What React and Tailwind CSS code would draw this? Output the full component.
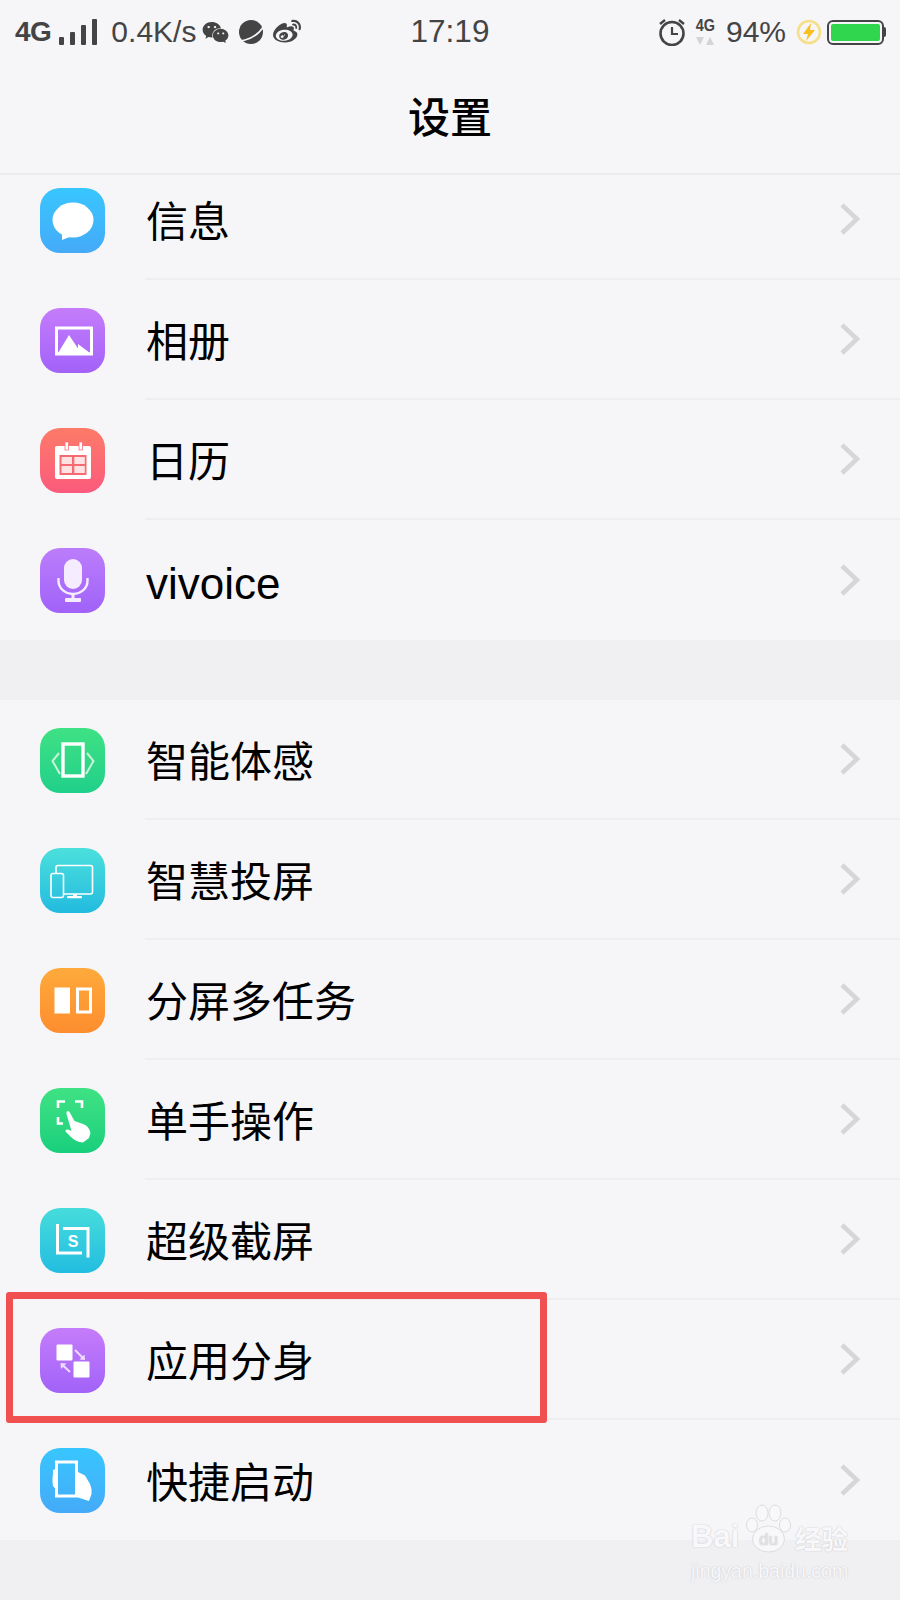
import { FaWeixin, FaWeibo } from "react-icons/fa";

const FONT = "font-['Liberation_Sans','Noto_Sans_CJK_SC',sans-serif]";

// Icon glyphs, drawn in a 65x65 box that fills the tile
function IconMessage() {
  return (
    <>
      <ellipse cx="33" cy="32" rx="20.5" ry="17.5" fill="#fff" />
      <path d="M22 43 L22 52 L32 48 Z" fill="#fff" />
    </>
  );
}

function IconPhoto() {
  return (
    <>
      <rect x="16.5" y="20" width="35" height="26" fill="none" stroke="#fff" strokeWidth="3" />
      <path d="M18 45 L29 27 L41 45 Z" fill="#fff" />
      <path d="M38 36 L50 45 L38 45 Z" fill="#fff" />
    </>
  );
}

function IconCalendar() {
  return (
    <>
      <rect x="15" y="18" width="36" height="33" rx="2" fill="#fff" />
      <rect x="25" y="14" width="3.4" height="8" fill="#fff" stroke="#f9707a" strokeWidth="0.8" />
      <rect x="39" y="14" width="3.4" height="8" fill="#fff" stroke="#f9707a" strokeWidth="0.8" />
      <rect x="19.5" y="27" width="27" height="20" fill="#f76a72" />
      <rect x="21.5" y="29" width="10.5" height="7" fill="#ffe3e3" />
      <rect x="34.3" y="29" width="10.5" height="7" fill="#ffe3e3" />
      <rect x="21.5" y="38" width="10.5" height="7" fill="#ffe3e3" />
      <rect x="34.3" y="38" width="10.5" height="7" fill="#ffe3e3" />
    </>
  );
}

function IconMic() {
  return (
    <>
      <rect x="24" y="11" width="18" height="30" rx="9" fill="#f6ecff" />
      <path d="M18.5 30 v3 a14.5 13 0 0 0 29 0 v-3" fill="none" stroke="#f6ecff" strokeWidth="2.4" />
      <rect x="31.5" y="45" width="3" height="6" fill="#f6ecff" />
      <rect x="25" y="50" width="16" height="4" rx="1" fill="#f6ecff" />
    </>
  );
}

function IconMotion() {
  return (
    <>
      <rect x="23" y="16" width="20" height="32" fill="none" stroke="#fff" strokeWidth="3.4" />
      <path d="M19 25 L12.5 33 L20 46" fill="none" stroke="#c8f5d8" strokeWidth="2" />
      <path d="M47 25 L53.5 33 L46 46" fill="none" stroke="#c8f5d8" strokeWidth="2" />
    </>
  );
}

function IconCast() {
  return (
    <>
      <path d="M16 25 V19.5 a2 2 0 0 1 2-2 H50.5 a2 2 0 0 1 2 2 V44 a2 2 0 0 1-2 2 H24" fill="none" stroke="#fff" strokeWidth="1.6" />
      <path d="M33 46 h4 v3 h-4z" fill="#fff" />
      <rect x="27" y="48" width="15" height="2.2" rx="1" fill="#fff" />
      <rect x="11" y="25.5" width="12.5" height="24" rx="2" fill="none" stroke="#fff" strokeWidth="1.6" />
    </>
  );
}

function IconSplit() {
  return (
    <>
      <rect x="14.5" y="19.5" width="15.5" height="26" fill="#fff" />
      <rect x="37.5" y="21" width="13" height="23" fill="none" stroke="#fff" strokeWidth="3" />
    </>
  );
}

function IconOneHand() {
  return (
    <>
      <path d="M18 20 V13.5 H25 M35 13.5 H42 V20 M18 29 V35.5 H23" fill="none" stroke="#fff" strokeWidth="2.6" />
      <path d="M26.5 24 Q28 22 29.5 24 L34.5 33 L43 36 Q49 38 50.5 45 L49 50 L43 54.5 Q36 54 31 49 L25.5 43.5 Q25 41 28 41.5 L31.5 43 L26.5 26 Z" fill="#fff" />
    </>
  );
}

function IconScreenshot() {
  return (
    <>
      <path d="M17.5 16 V45 H42" fill="none" stroke="#fff" strokeWidth="3" />
      <path d="M23 20.5 H48 V49.5" fill="none" stroke="#fff" strokeWidth="3" />
      <text x="33" y="38.5" textAnchor="middle" fontSize="16" fontWeight="700" fontFamily="Liberation Sans" fill="#fff">S</text>
    </>
  );
}

function IconClone() {
  return (
    <>
      <rect x="16.5" y="16.5" width="16" height="16" rx="1" fill="#fff" />
      <rect x="33.5" y="33.5" width="16" height="16" rx="1" fill="#fff" />
      <path d="M35 22 L43 30" stroke="#ecdcff" strokeWidth="2" />
      <path d="M45 32 L44.5 26.5 L39.5 31.5 Z" fill="#ecdcff" />
      <path d="M30 44 L23 37.5" stroke="#ecdcff" strokeWidth="2" />
      <path d="M20.5 35 L21 41 L26.5 35.5 Z" fill="#ecdcff" />
    </>
  );
}

function IconQuick() {
  return (
    <>
      <rect x="16.5" y="14" width="20" height="34" fill="none" stroke="#fff" strokeWidth="3" />
      <path d="M38 24 L45 27.5 L50 36 Q52 40 51.5 46 L49 53 L38 49.5 Z" fill="#fff" />
      <path d="M16 21 L13 22 V26 L12.5 30 V34 L13 38 L15.5 41 Z" fill="#fff" />
    </>
  );
}

const GROUP_ONE = [
  { label: "信息", tile: "from-[#38c6fe] to-[#44aaf8]", Glyph: IconMessage },
  { label: "相册", tile: "from-[#c57cfb] to-[#a262f8]", Glyph: IconPhoto },
  { label: "日历", tile: "from-[#fd7a68] to-[#fb5a7c]", Glyph: IconCalendar },
  { label: "vivoice", tile: "from-[#bc7dfb] to-[#a062f8]", Glyph: IconMic, wide: true },
];

const GROUP_TWO = [
  { label: "智能体感", tile: "from-[#3ee184] to-[#1fd08a]", Glyph: IconMotion },
  { label: "智慧投屏", tile: "from-[#4be0dc] to-[#21bbdf]", Glyph: IconCast },
  { label: "分屏多任务", tile: "from-[#feaa3c] to-[#fd8d2e]", Glyph: IconSplit },
  { label: "单手操作", tile: "from-[#3ee284] to-[#17cf7c]", Glyph: IconOneHand },
  { label: "超级截屏", tile: "from-[#46dcdc] to-[#22bde0]", Glyph: IconScreenshot },
  { label: "应用分身", tile: "from-[#c57cfb] to-[#a262f8]", Glyph: IconClone },
  { label: "快捷启动", tile: "from-[#38c6fe] to-[#44aaf8]", Glyph: IconQuick },
];

function SettingsRow({ label, tile, Glyph, last, wide }) {
  return (
    <div className="flex h-[120px] items-center pl-[40px]">
      <div className={`h-[65px] w-[65px] shrink-0 rounded-[20px] bg-linear-to-b ${tile}`}>
        <svg viewBox="0 0 65 65" className="h-full w-full">
          <Glyph />
        </svg>
      </div>
      <div className={`ml-[40px] flex h-full flex-1 items-center justify-between pr-[38px] ${last ? "" : "border-b-2 border-[#eeedf0]"}`}>
        <span className={`pl-[1px] pt-[8px] leading-none text-black ${wide ? "text-[44px]" : "text-[42px]"}`}>{label}</span>
        <svg viewBox="0 0 24 34" className="h-[34px] w-[24px]">
          <path d="M4 3 L19 17 L4 31" fill="none" stroke="#d6d6d8" strokeWidth="4.5" />
        </svg>
      </div>
    </div>
  );
}

function SignalBars() {
  return (
    <div className="flex h-[26px] items-end gap-[6px]">
      <div className="h-[8px] w-[5px] rounded-[1px] bg-[#444]" />
      <div className="h-[13px] w-[5px] rounded-[1px] bg-[#444]" />
      <div className="h-[20px] w-[5px] rounded-[1px] bg-[#444]" />
      <div className="h-[26px] w-[5px] rounded-[1px] bg-[#444]" />
    </div>
  );
}

function StatusBar() {
  return (
    <div className="grid h-[62px] grid-cols-[1fr_auto_1fr] items-center pt-[2px] text-[30px] leading-none text-[#444]">
      <div className="flex items-center pl-[15px]">
        <span className="text-[28px] font-bold tracking-[-0.5px]">4G</span>
        <div className="ml-[8px]"><SignalBars /></div>
        <span className="ml-[14px]">0.4K/s</span>
        <FaWeixin className="ml-[6px] text-[27px]" />
        <svg viewBox="0 0 28 28" className="ml-[8px] h-[28px] w-[28px]">
          <circle cx="14" cy="14" r="12" fill="#444" />
          <path d="M1 21 Q1 24 8 22 Q20 19 27 8 Q28 4 25 4" fill="none" stroke="#f6f5f8" strokeWidth="1.6" />
        </svg>
        <FaWeibo className="ml-[8px] text-[28px]" />
      </div>
      <span className="text-[31.5px]">17:19</span>
      <div className="flex items-center justify-end pr-[14px]">
        <svg viewBox="0 0 28 28" className="h-[28px] w-[28px]">
          <circle cx="14" cy="15.5" r="11.5" fill="none" stroke="#444" strokeWidth="2.6" />
          <path d="M14 9 V16 H20" fill="none" stroke="#444" strokeWidth="2.2" />
          <path d="M2 6 L7 2 M26 6 L21 2" stroke="#444" strokeWidth="2.4" />
        </svg>
        <div className="ml-[7px] flex w-[24px] flex-col items-center">
          <span className="origin-center scale-x-[0.85] text-[17px] font-bold leading-[16px]">4G</span>
          <svg viewBox="0 0 20 9" className="mt-[3px] h-[9px] w-[20px]">
            <path d="M1 0 H9 L5 8 Z M11 8 H19 L15 0 Z" fill="#d4d4d6" />
          </svg>
        </div>
        <span className="ml-[9px]">94%</span>
        <svg viewBox="0 0 26 26" className="ml-[10px] h-[26px] w-[26px]">
          <circle cx="13" cy="13" r="11" fill="none" stroke="#f5e08a" strokeWidth="2.6" />
          <path d="M15 4 L7 15 H12 L10 22 L19 11 H14 Z" fill="#fbbf1d" />
        </svg>
        <div className="ml-[5px] flex items-center">
          <div className="h-[25px] w-[57px] rounded-[6px] border-2 border-[#444] p-[2px]">
            <div className="h-full w-full rounded-[2px] bg-[#2fd64e]" />
          </div>
          <div className="h-[10px] w-[2px] rounded-r-[2px] bg-[#444]" />
        </div>
      </div>
    </div>
  );
}

function Watermark() {
  return (
    <div className="absolute left-[691px] top-[1503px] flex w-[160px] flex-col text-[#f8f8fa] [text-shadow:0_0_1.5px_#bdbdc0]">
      <div className="flex h-[50px] items-end">
        <span className="w-[50px] pb-[1px] text-[31px] font-bold leading-none">Bai</span>
        <svg viewBox="0 0 47 49" className="ml-[4px] h-[49px] w-[47px]">
          <g fill="#f8f8fa" stroke="#d6d6d8" strokeWidth="0.8">
            <ellipse cx="7" cy="21" rx="5.5" ry="7" />
            <ellipse cx="17" cy="9" rx="6" ry="8" />
            <ellipse cx="30" cy="9" rx="6" ry="8" />
            <ellipse cx="40" cy="21" rx="5.5" ry="7" />
            <ellipse cx="23.5" cy="35" rx="16" ry="13" />
          </g>
          <text x="23.5" y="41" textAnchor="middle" fontSize="17" fontFamily="Liberation Sans" fill="#e2e2e4" stroke="none">du</text>
        </svg>
        <span className="ml-[3px] text-[26.5px] font-bold leading-none">经验</span>
      </div>
      <span className="mt-[9px] whitespace-nowrap text-[19.5px] leading-none">jingyan.baidu.com</span>
    </div>
  );
}

export default function App() {
  return (
    <div className={`relative h-[1600px] w-[900px] overflow-hidden bg-[#f0eff2] ${FONT}`}>
      {/* Header sits over the scrolled list */}
      <header className="relative z-10 h-[175px] border-b-2 border-[#ebeaed] bg-[#f6f5f8]">
        <StatusBar />
        <h1 className="mt-[36px] text-center text-[42px] font-medium leading-none text-black">设置</h1>
      </header>

      <div className="-mt-[15px]">
        <section className="bg-[#f6f5f8]">
          {GROUP_ONE.map((item, i) => (
            <SettingsRow key={item.label} {...item} last={i === GROUP_ONE.length - 1} />
          ))}
        </section>
        <section className="mt-[60px] bg-[#f6f5f8]">
          {GROUP_TWO.map((item, i) => (
            <SettingsRow key={item.label} {...item} last={i === GROUP_TWO.length - 1} />
          ))}
        </section>
      </div>

      {/* Red annotation box */}
      <div className="absolute left-[6px] top-[1292px] h-[131px] w-[541px] rounded-[3px] border-[7px] border-[#f05050]" />

      <Watermark />
    </div>
  );
}
